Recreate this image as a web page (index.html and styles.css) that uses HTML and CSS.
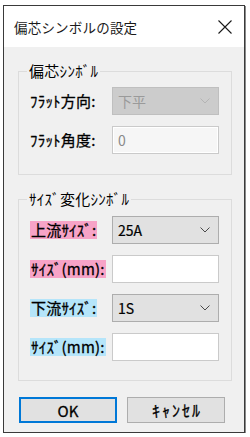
FILE: index.html
```html
<!DOCTYPE html>
<html lang="ja">
<head>
  <meta charset="UTF-8">
  <title>偏芯シンボルの設定</title>
  <link rel="stylesheet" href="styles.css">
</head>
<body>
  <div class="window">
    <!-- Title bar -->
    <div class="titlebar">
      <span class="title">偏芯シンボルの設定</span>
      <svg class="close" width="14" height="14" viewBox="0 0 14 14">
        <path d="M0.5 0.5 L13.5 13.5 M13.5 0.5 L0.5 13.5" stroke="#1a1a1a" stroke-width="1.1" fill="none"/>
      </svg>
    </div>

    <div class="client">
      <!-- Eccentric symbol group -->
      <div class="group group-first">
        <span class="legend">偏芯ｼﾝﾎﾞﾙ</span>
        <div class="rows">
          <span class="label">ﾌﾗｯﾄ方向:</span>
          <div class="combo disabled">
            <span>下平</span>
            <svg width="10" height="6" viewBox="0 0 10 6"><polyline points="0.5,0.5 5,5 9.5,0.5" fill="none" stroke="#b4b4b4" stroke-width="1"/></svg>
          </div>

          <span class="label">ﾌﾗｯﾄ角度:</span>
          <div class="textbox disabled">0</div>
        </div>
      </div>

      <!-- Size change symbol group -->
      <div class="group group-second">
        <span class="legend">ｻｲｽﾞ変化ｼﾝﾎﾞﾙ</span>
        <div class="rows">
          <span class="label"><span class="mark pink">上流ｻｲｽﾞ:</span></span>
          <div class="combo">
            <span>25A</span>
            <svg width="10" height="6" viewBox="0 0 10 6"><polyline points="0.5,0.5 5,5 9.5,0.5" fill="none" stroke="#4a4a4a" stroke-width="1"/></svg>
          </div>

          <span class="label"><span class="mark pink">ｻｲｽﾞ(mm):</span></span>
          <div class="textbox"></div>

          <span class="label"><span class="mark blue">下流ｻｲｽﾞ:</span></span>
          <div class="combo">
            <span>1S</span>
            <svg width="10" height="6" viewBox="0 0 10 6"><polyline points="0.5,0.5 5,5 9.5,0.5" fill="none" stroke="#4a4a4a" stroke-width="1"/></svg>
          </div>

          <span class="label"><span class="mark blue">ｻｲｽﾞ(mm):</span></span>
          <div class="textbox"></div>
        </div>
      </div>

      <!-- Buttons -->
      <div class="buttons">
        <button class="btn default">OK</button>
        <button class="btn wide">ｷｬﾝｾﾙ</button>
      </div>
    </div>
  </div>
</body>
</html>
```

FILE: styles.css
```css
body {
  margin: 0;
  background: #ffffff;
  font-family: "Noto Sans CJK JP", "Noto Sans", sans-serif;
  color: #000;
}

.window {
  margin: 5px 0 0 3px;
  width: 240px;
  height: 426px;
  border: 1px solid #3a3a3a;
  box-shadow: 1px 1px 0 #8a8a8a;
  display: flex;
  flex-direction: column;
  background: #f0f0f0;
}

.titlebar {
  height: 41px;
  background: #ffffff;
  display: flex;
  align-items: center;
  justify-content: space-between;
  padding: 1px 12px 0 10px;
  box-sizing: border-box;
  flex-shrink: 0;
}

.title {
  font-size: 13.5px;
  color: #1a1a1a;
  letter-spacing: 0.2px;
}

.close {
  display: block;
}

.client {
  flex: 1;
  padding: 0 12px 0 14px;
}

.group {
  position: relative;
  border: 1px solid #dcdcdc;
  margin-top: 24px;
}

.group-first {
  padding: 15px 0 20px 11px;
}

.group-second {
  padding: 16px 0 19px 11px;
}

.legend {
  position: absolute;
  top: -10px;
  left: 8px;
  padding: 0 2px;
  background: #f0f0f0;
  font-size: 15px;
  line-height: 18px;
  letter-spacing: 0.3px;
}

.rows {
  display: grid;
  grid-template-columns: 82px 107px;
  grid-auto-rows: 28px;
  row-gap: 11px;
  align-items: center;
}

.label {
  font-size: 15px;
  line-height: 18px;
  letter-spacing: 0.2px;
  -webkit-text-stroke: 0.3px #000;
  white-space: nowrap;
}

.mark {
  display: inline-block;
  padding: 0 1px;
  line-height: 18px;
}

.pink {
  background: #f7a3c7;
}

.blue {
  background: #b5e5fa;
}

.combo {
  height: 28px;
  box-sizing: border-box;
  border: 1px solid #adadad;
  background: #e1e1e1;
  display: flex;
  align-items: center;
  justify-content: space-between;
  padding: 0 8px 0 5px;
  font-size: 14px;
  -webkit-text-stroke: 0.2px #000;
}

.combo.disabled {
  background: #cccccc;
  border-color: #bfbfbf;
  color: #9a9a9a;
  -webkit-text-stroke: 0;
}

.textbox {
  height: 28px;
  box-sizing: border-box;
  border: 1px solid #cacaca;
  background: #ffffff;
  padding: 0 5px;
  font-size: 14px;
  line-height: 26px;
}

.textbox.disabled {
  background: #f6f6f6;
  box-shadow: inset 0 0 0 1px #ffffff;
  color: #8a8a8a;
}

.buttons {
  display: flex;
  gap: 10px;
  margin-top: 16px;
  padding-left: 1px;
}

.btn {
  width: 98px;
  height: 26px;
  box-sizing: border-box;
  border: 1px solid #adadad;
  background: #e1e1e1;
  font-family: "Noto Sans CJK JP", "Noto Sans", sans-serif;
  font-size: 15px;
  -webkit-text-stroke: 0.3px #000;
  padding: 0;
  color: #000;
}

.btn.wide {
  font-size: 16px;
  letter-spacing: 2px;
  padding-left: 2px;
}

.btn.default {
  border: 2px solid #0078d7;
}
```
